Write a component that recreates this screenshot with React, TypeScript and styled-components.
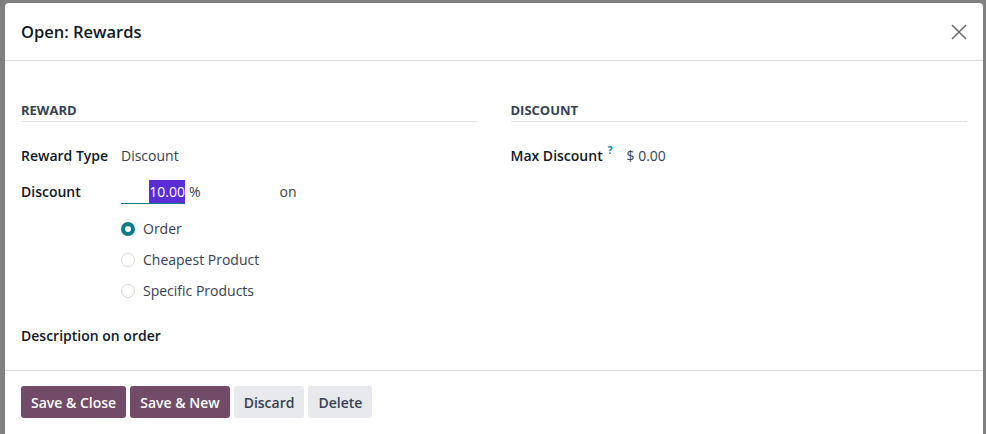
import React, { ReactElement } from 'react';
import styled, { createGlobalStyle } from 'styled-components';

const GlobalStyle = createGlobalStyle`
  html, body {
    margin: 0;
    padding: 0;
    background: #808080;
    overflow: hidden;
  }
  body {
    font-family: 'Open Sans', 'Noto Sans', sans-serif;
    font-size: 14px;
    color: #1f2937;
  }
`;

const REWARD_OPTIONS = [
  { label: 'Order', checked: true },
  { label: 'Cheapest Product', checked: false },
  { label: 'Specific Products', checked: false },
];

function App(): ReactElement {
  return (
    <>
      <GlobalStyle />
      <Backdrop>
        <Modal>
          <ModalHeader>
            <Title>Open: Rewards</Title>
            <CloseButton aria-label="Close">
              <svg width="16" height="16" viewBox="0 0 16 16">
                <path d="M1 1 L15 15 M15 1 L1 15" stroke="#6b6b6b" strokeWidth="1.5" />
              </svg>
            </CloseButton>
          </ModalHeader>
          <ModalBody>
            <Column>
              <SectionTitle>Reward</SectionTitle>
              <FieldRow>
                <Label>Reward Type</Label>
                <Value>Discount</Value>
              </FieldRow>
              <FieldRow>
                <Label>Discount</Label>
                <Value>
                  <DiscountLine>
                    <AmountInput>
                      <Selected>10.00</Selected>
                    </AmountInput>
                    <Unit>%</Unit>
                    <OnText>on</OnText>
                  </DiscountLine>
                  <RadioList>
                    {REWARD_OPTIONS.map(({ label, checked }) => (
                      <RadioItem key={label}>
                        <RadioCircle checked={checked} />
                        <span>{label}</span>
                      </RadioItem>
                    ))}
                  </RadioList>
                </Value>
              </FieldRow>
              <DescriptionLabel>Description on order</DescriptionLabel>
            </Column>
            <Column>
              <SectionTitle>Discount</SectionTitle>
              <FieldRow>
                <Label width={116}>
                  Max Discount<Help>?</Help>
                </Label>
                <Value>$ 0.00</Value>
              </FieldRow>
            </Column>
          </ModalBody>
          <ModalFooter>
            <Button primary>Save &amp; Close</Button>
            <Button primary>Save &amp; New</Button>
            <Button>Discard</Button>
            <Button>Delete</Button>
          </ModalFooter>
        </Modal>
      </Backdrop>
    </>
  );
}

const Backdrop = styled.div`
  width: 986px;
  height: 434px;
  padding: 3px 3px 0 5px;
  box-sizing: border-box;
  overflow: hidden;
`;

const Modal = styled.div`
  background: #fff;
  border-radius: 4px 4px 0 0;
  height: 480px;
`;

const ModalHeader = styled.div`
  height: 57px;
  display: flex;
  align-items: center;
  justify-content: space-between;
  padding: 0 16px;
  border-bottom: 1px solid #d8dadd;
`;

const Title = styled.h4`
  margin: 0;
  font-size: 16.5px;
  font-weight: 600;
  color: #111827;
`;

const CloseButton = styled.button`
  border: none;
  background: none;
  padding: 0;
  width: 16px;
  height: 16px;
  display: flex;
  cursor: pointer;
`;

const ModalBody = styled.div`
  display: grid;
  grid-template-columns: 1fr 1fr;
  column-gap: 33px;
  padding: 40px 16px 0;
  height: 269px;
  border-bottom: 1px solid #d8dadd;
`;

const Column = styled.div`
  display: flex;
  flex-direction: column;
`;

const SectionTitle = styled.div`
  font-size: 13px;
  font-weight: 700;
  text-transform: uppercase;
  color: #374151;
  line-height: 18px;
  padding-bottom: 2px;
  border-bottom: 1px solid #e2e4e8;
  margin-bottom: 23px;
`;

const FieldRow = styled.div`
  display: flex;
  align-items: flex-start;
  margin-bottom: 14px;
`;

const Label = styled.div<{ width?: number }>`
  width: ${({ width }) => width ?? 100}px;
  flex-shrink: 0;
  font-weight: 600;
  color: #111827;
  line-height: 22px;
  white-space: nowrap;
`;

const Value = styled.div`
  flex: 1;
  color: #374151;
  line-height: 22px;
`;

const DescriptionLabel = styled(Label)`
  width: auto;
  margin-top: 9px;
`;

const DiscountLine = styled.div`
  display: flex;
  align-items: center;
  height: 22px;
`;

const AmountInput = styled.div`
  width: 64px;
  text-align: right;
  border-bottom: 1px solid #017e84;
  line-height: 20px;
  height: 23px;
  box-sizing: border-box;
  padding-top: 1px;
`;

const Selected = styled.span`
  background: #5b2dd4;
  color: #fff;
  padding: 2px 0;
`;

const Unit = styled.span`
  margin-left: 4px;
`;

const OnText = styled.span`
  margin-left: 79px;
`;

const RadioList = styled.div`
  display: flex;
  flex-direction: column;
  gap: 9px;
  margin-top: 15px;
`;

const RadioItem = styled.div`
  display: flex;
  align-items: center;
  gap: 8px;
  line-height: 22px;
`;

const RadioCircle = styled.span<{ checked: boolean }>`
  width: 14px;
  height: 14px;
  border-radius: 50%;
  box-sizing: border-box;
  flex-shrink: 0;
  background: #fff;
  border: ${({ checked }) => (checked ? '4px solid #017e84' : '1px solid #d1d5db')};
`;

const Help = styled.span`
  color: #0180a5;
  font-size: 10px;
  font-weight: 700;
  line-height: 10px;
  vertical-align: top;
  margin-left: 5px;
`;

const ModalFooter = styled.div`
  display: flex;
  gap: 4px;
  padding: 15px 16px;
`;

const Button = styled.button<{ primary?: boolean }>`
  height: 32px;
  padding: 0 10px;
  border: none;
  border-radius: 3px;
  font-family: inherit;
  font-size: 14px;
  font-weight: 600;
  cursor: pointer;
  background: ${({ primary }) => (primary ? '#714b67' : '#e7e9ed')};
  color: ${({ primary }) => (primary ? '#fff' : '#374151')};
`;

export default App;
